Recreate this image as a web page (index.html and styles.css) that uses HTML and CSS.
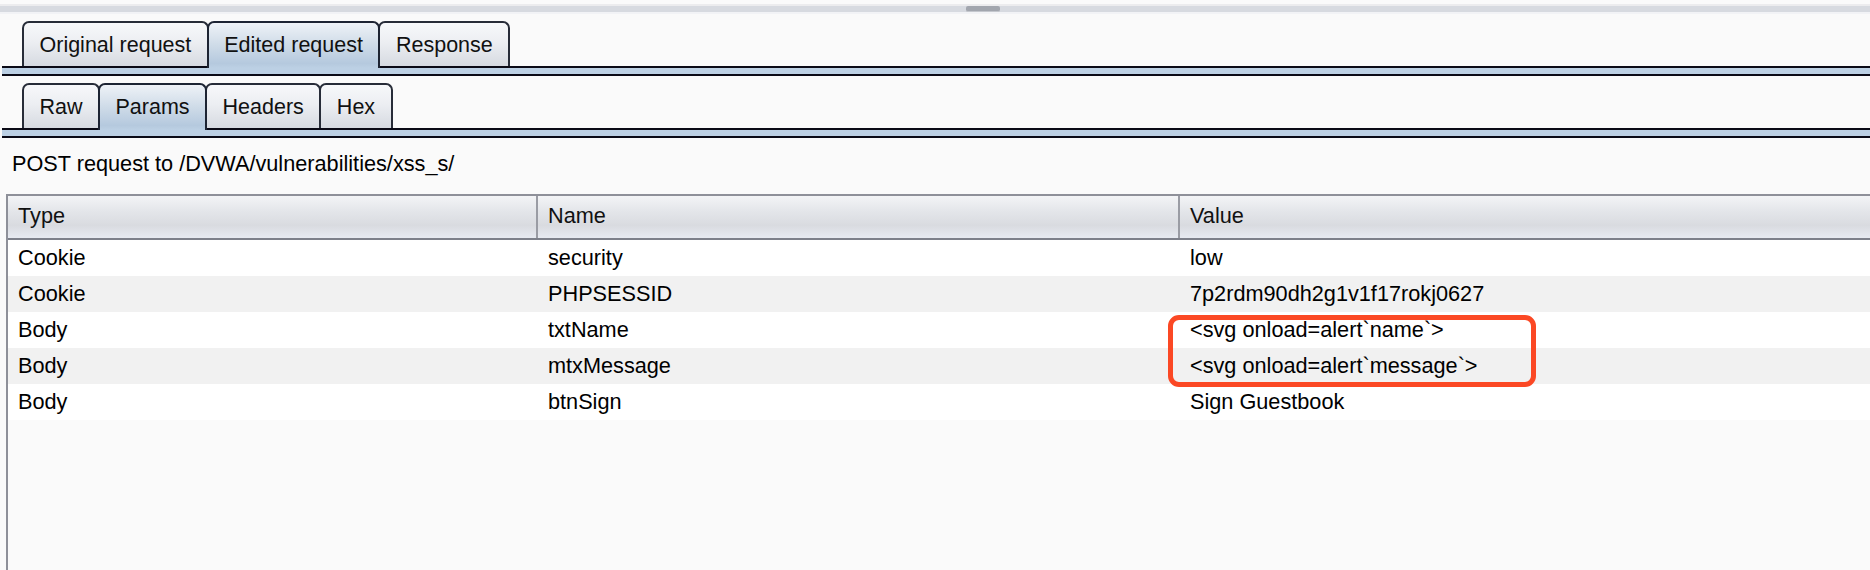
FILE: index.html
```html
<!DOCTYPE html>
<html>
<head>
<meta charset="utf-8">
<link rel="stylesheet" href="styles.css">
</head>
<body>
<div class="topbar"><div class="grip"></div></div>

<div class="tabbar first">
  <div class="tab">Original request</div>
  <div class="tab active">Edited request</div>
  <div class="tab">Response</div>
</div>
<div class="strip"></div>

<div class="tabbar second">
  <div class="tab">Raw</div>
  <div class="tab active">Params</div>
  <div class="tab">Headers</div>
  <div class="tab">Hex</div>
</div>
<div class="strip"></div>

<div class="info">POST request to /DVWA/vulnerabilities/xss_s/</div>

<div class="table">
  <div class="thead">
    <div class="th">Type</div>
    <div class="th">Name</div>
    <div class="th last">Value</div>
  </div>
  <div class="rows">
    <div class="row"><div class="td">Cookie</div><div class="td">security</div><div class="td">low</div></div>
    <div class="row alt"><div class="td">Cookie</div><div class="td">PHPSESSID</div><div class="td">7p2rdm90dh2g1v1f17rokj0627</div></div>
    <div class="row"><div class="td">Body</div><div class="td">txtName</div><div class="td">&lt;svg onload=alert`name`&gt;</div></div>
    <div class="row alt"><div class="td">Body</div><div class="td">mtxMessage</div><div class="td">&lt;svg onload=alert`message`&gt;</div></div>
    <div class="row"><div class="td">Body</div><div class="td">btnSign</div><div class="td">Sign Guestbook</div></div>
    <div class="highlight"></div>
  </div>
</div>
</body>
</html>
```

FILE: styles.css
```css
html, body {
  margin: 0;
  padding: 0;
  height: 570px;
  overflow: hidden;
  background: #fafafa;
  font-family: "Liberation Sans", Arial, sans-serif;
  font-size: 21.7px;
  color: #000;
}

.topbar {
  position: relative;
  margin-top: 4px;
  height: 6px;
  background: #d7dae0;
  border-top: 2px solid #ececee;
  border-bottom: 2px solid #f2f3f6;
}

.grip {
  position: absolute;
  left: 966px;
  top: 0;
  width: 34px;
  height: 5px;
  border-radius: 2px;
  background: #a2a6ae;
  border-bottom: 1px solid #c4c7cd;
}

.tabbar {
  display: flex;
  align-items: flex-end;
  padding-left: 22px;
  font-size: 21.5px;
}

.tabbar.first {
  margin-top: 7px;
}

.tabbar.second {
  margin-top: 7px;
}

.tab {
  box-sizing: border-box;
  height: 45px;
  padding: 0 15.5px;
  line-height: 45px;
  border: 2px solid #272c38;
  border-bottom: none;
  border-radius: 7px 7px 0 0;
  background: linear-gradient(#f7f8fa 0%, #eceef2 45%, #d6dae1 100%);
  color: #111;
  white-space: nowrap;
}

.tab + .tab {
  margin-left: -2px;
}

.tab.active {
  position: relative;
  z-index: 1;
  height: 47px;
  margin-bottom: -2px;
  border-color: #1d2433;
  background: linear-gradient(#eef2f7 0%, #d1dde9 45%, #b5c9de 90%, #bcd0e4 100%);
}

.strip {
  margin-left: 2px;
  height: 6px;
  background: #bcd0e4;
  border-top: 2px solid #0a0a16;
  border-bottom: 2px solid #0a0a16;
}

.info {
  height: 56px;
  box-sizing: border-box;
  padding: 14px 0 0 12px;
  line-height: 24px;
}

.table {
  margin-left: 6px;
  height: 400px;
  border-left: 2px solid #8e9099;
  background: #fafafa;
}

.thead {
  display: grid;
  grid-template-columns: 530px 642px 1fr;
  height: 42px;
  border-top: 2px solid #8e9099;
  border-bottom: 2px solid #7d808a;
  background: linear-gradient(#f3f4f6 0%, #e4e6ea 35%, #d9dbe0 70%, #e7eaf1 100%);
}

.th {
  box-sizing: border-box;
  padding-left: 10px;
  line-height: 39px;
  border-right: 2px solid #9a9ca4;
  color: #111;
}

.th.last {
  border-right: none;
}

.rows {
  position: relative;
}

.row {
  display: grid;
  grid-template-columns: 530px 642px 1fr;
  height: 36px;
  line-height: 36px;
  background: #ffffff;
}

.row.alt {
  background: #f1f1f1;
}

.td {
  padding-left: 10px;
  white-space: nowrap;
}

.highlight {
  position: absolute;
  left: 1160px;
  top: 75px;
  width: 368px;
  height: 72px;
  box-sizing: border-box;
  border: 5px solid #fb4824;
  border-radius: 11px;
}
```
